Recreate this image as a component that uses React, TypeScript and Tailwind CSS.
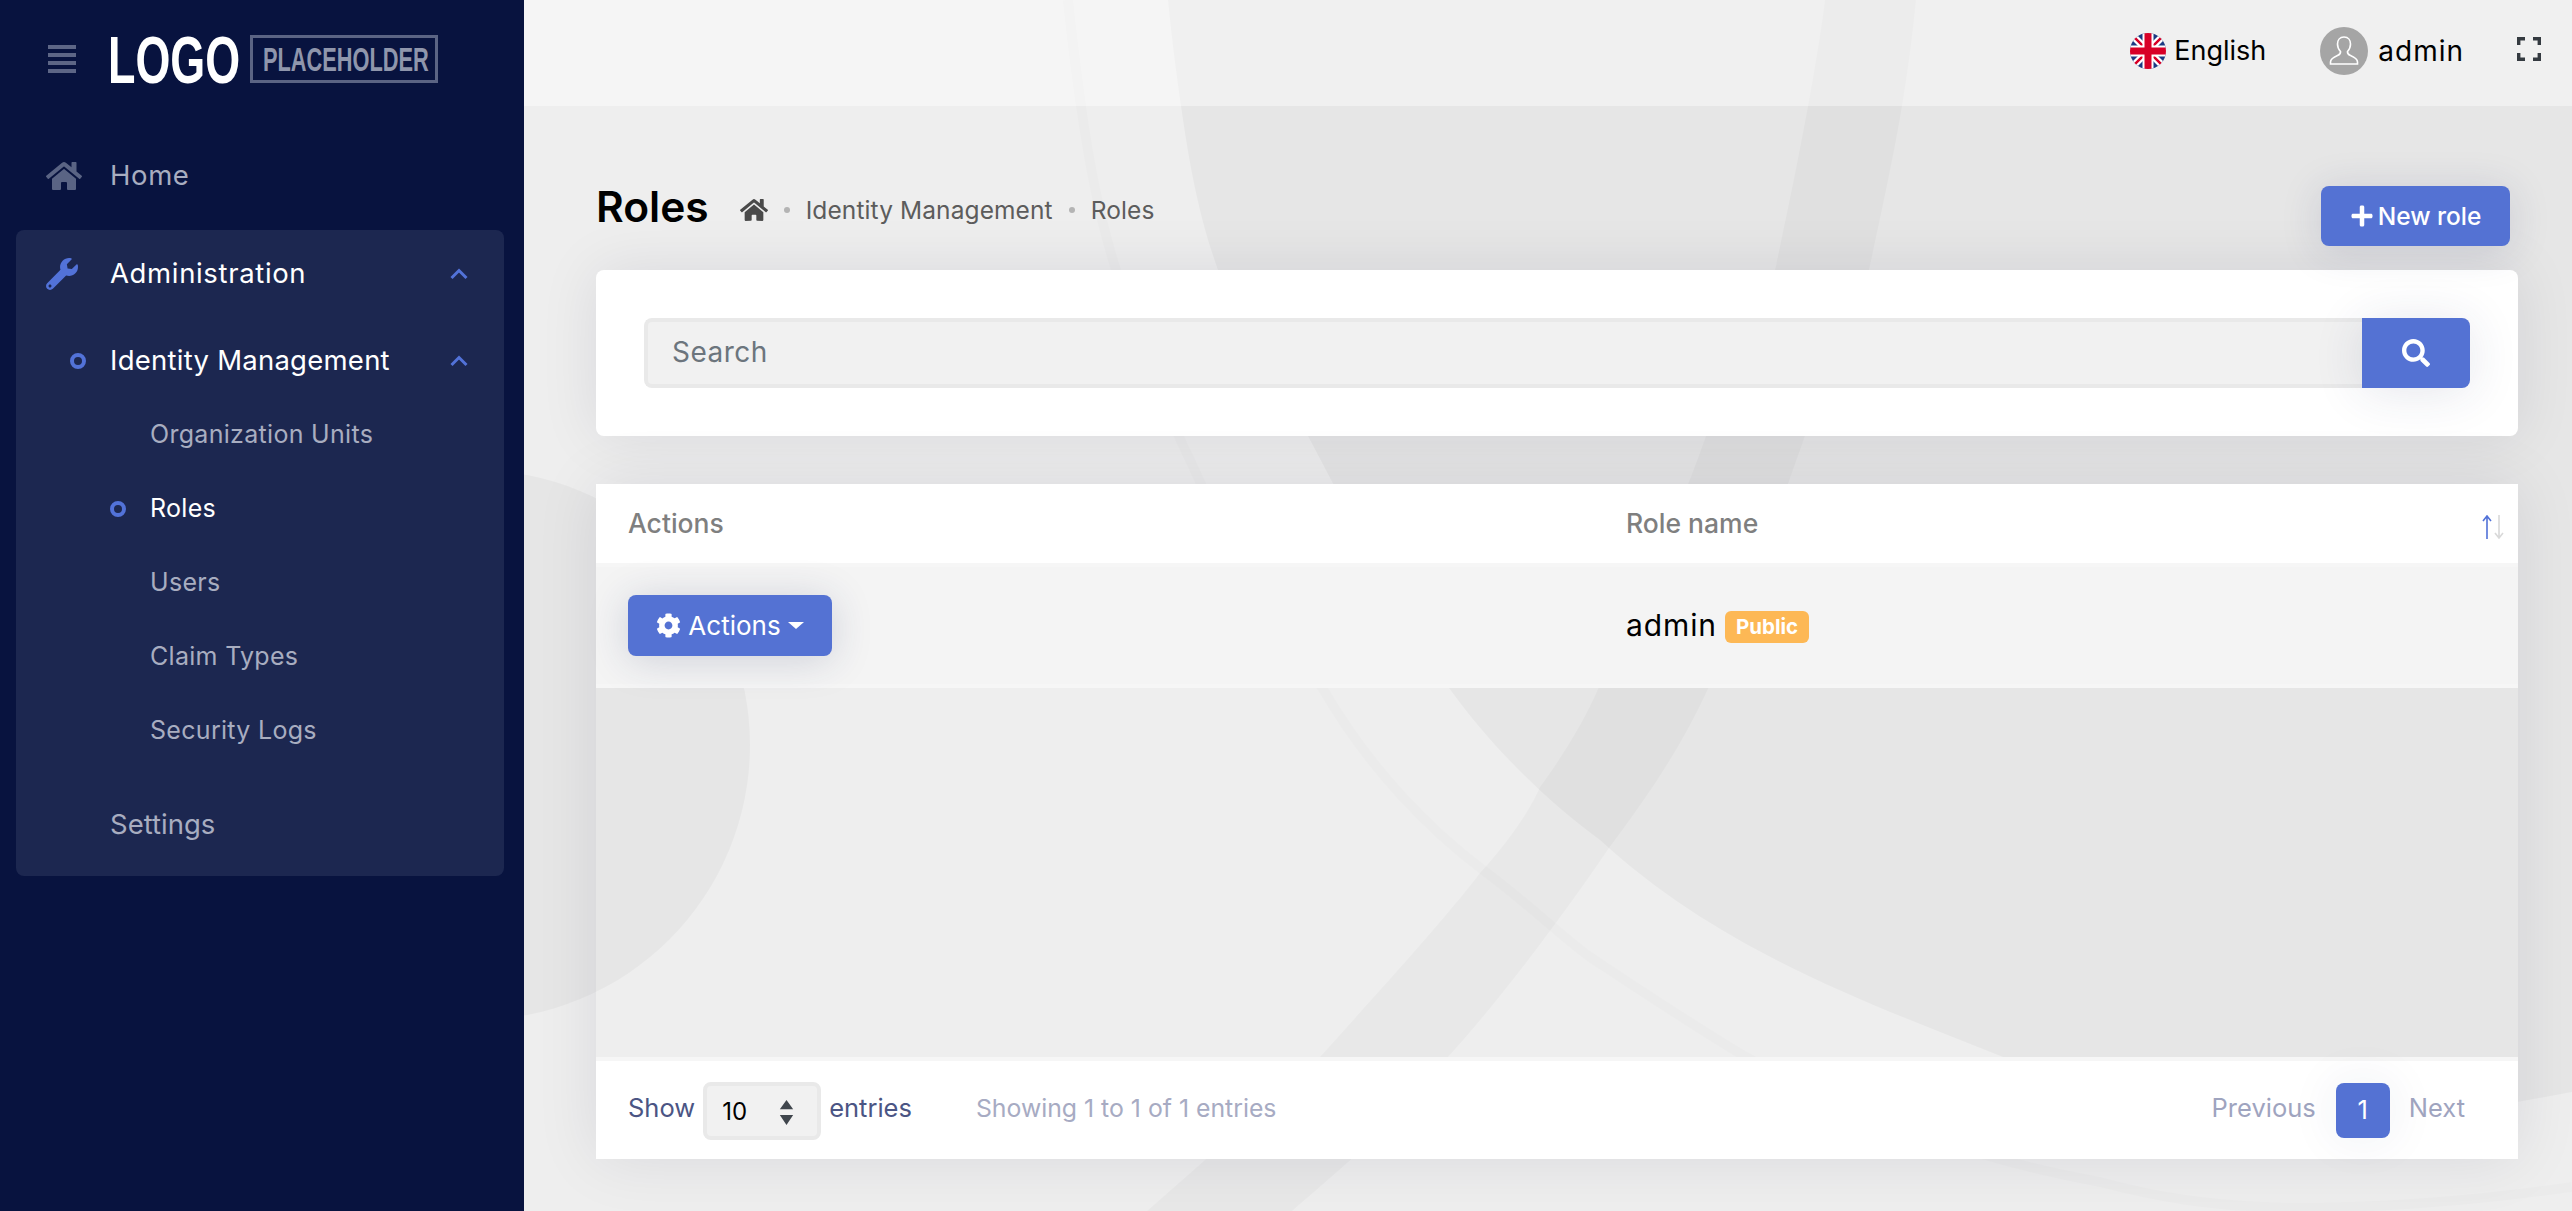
import { FaHome, FaWrench, FaCog, FaPlus, FaSearch } from "react-icons/fa";

const subItems = [
  { label: "Organization Units", active: false },
  { label: "Roles", active: true },
  { label: "Users", active: false },
  { label: "Claim Types", active: false },
  { label: "Security Logs", active: false },
];

function ChevronUp() {
  return (
    <svg width="18" height="12" viewBox="0 0 18 12" fill="none" className="text-[#5272d8]">
      <polyline points="1.5,10 9,2.5 16.5,10" stroke="currentColor" strokeWidth="3" />
    </svg>
  );
}

function Ring() {
  return <span className="block w-4 h-4 rounded-full border-4 border-[#5272d8]" />;
}

function Logo() {
  return (
    <div className="flex items-center gap-[10px] h-12">
      <div className="w-[132px] h-12 overflow-visible flex items-center">
        <span className="inline-block origin-left scale-x-[0.67] text-[67px] leading-none font-bold text-white whitespace-nowrap [font-family:'Liberation_Sans',sans-serif]">
          LOGO
        </span>
      </div>
      <div className="w-[188px] h-12 border-[3px] border-[#5b6484] flex items-center pl-[10px]">
        <span className="inline-block origin-left scale-x-[0.66] text-[33px] leading-none font-bold text-[#8f96ac] whitespace-nowrap [font-family:'Liberation_Sans',sans-serif]">
          PLACEHOLDER
        </span>
      </div>
    </div>
  );
}

function Sidebar() {
  return (
    <aside className="relative z-10 w-[524px] shrink-0 h-full bg-[#08133f] text-[27.5px]">
      <div className="h-[118px] flex items-center pl-12 pt-0">
        <div className="w-7 mr-8 flex flex-col gap-[4px]">
          <span className="h-1 bg-[#5d6686]" />
          <span className="h-1 bg-[#5d6686]" />
          <span className="h-1 bg-[#5d6686]" />
          <span className="h-1 bg-[#5d6686]" />
        </div>
        <Logo />
      </div>
      <div className="h-[112px] flex items-center pl-[46px] pt-1 tracking-[0.6px] text-[#a8adc0]">
        <span className="w-16">
          <FaHome size={36} className="text-[#5a6484]" />
        </span>
        Home
      </div>
      <div className="ml-4 mr-5 h-[646px] rounded-lg bg-[#1c2750]">
        <div className="h-[84px] flex items-center pl-[30px] pr-9 pt-1 tracking-[0.65px] text-white">
          <span className="w-16">
            <FaWrench size={32} className="text-[#5272d8]" />
          </span>
          <span className="flex-1">Administration</span>
          <ChevronUp />
        </div>
        <div className="h-[74px] mt-[10px] flex items-center pl-[54px] pr-9 tracking-[0.25px] text-white">
          <span className="w-10">
            <Ring />
          </span>
          <span className="flex-1">Identity Management</span>
          <ChevronUp />
        </div>
        {subItems.map((item) => (
          <div
            key={item.label}
            className={`h-[74px] flex items-center pl-[94px] text-[25px] tracking-[0.3px] ${item.active ? "text-white" : "text-[#a8adc0]"}`}
          >
            <span className="w-10">{item.active && <Ring />}</span>
            {item.label}
          </div>
        ))}
        <div className="h-[76px] mt-[19px] flex items-center pl-[94px] text-[#a8adc0]">Settings</div>
      </div>
    </aside>
  );
}

function Background() {
  return (
    <svg className="absolute inset-0 w-full h-full" viewBox="524 0 2048 1211" preserveAspectRatio="none">
      <circle cx="475" cy="745" r="275" fill="#000" fillOpacity="0.033" />
      <path
        d="M1168 0 C1172 40 1176 70 1181 106 C1190 170 1200 220 1218 270 C1240 330 1275 380 1308 436 C1355 525 1400 615 1449 688 C1490 745 1545 800 1600 840 C1720 950 1860 1000 2003 1057 C2070 1095 2130 1120 2200 1135 C2330 1135 2450 1115 2572 1092 L2572 0 Z"
        fill="#000"
        fillOpacity="0.033"
      />
      <path
        d="M1147 1211 L1205 1160 L1320 1057 C1380 990 1440 925 1480 873 C1510 840 1530 810 1540 787 C1560 760 1585 720 1598 689 C1640 600 1680 510 1706 436 C1735 370 1760 320 1775 270 C1790 200 1815 80 1825 0 L1916 0 C1912 40 1908 70 1902 106 C1895 150 1880 220 1869 270 C1850 340 1830 380 1805 436 C1775 520 1745 610 1708 689 C1680 750 1645 800 1609 848 C1560 920 1500 1000 1448 1057 C1410 1110 1340 1170 1292 1211 Z"
        fill="#000"
        fillOpacity="0.022"
      />
      <path
        d="M1068 0 C1072 40 1076 70 1081 106 C1090 170 1100 220 1116 270 C1140 340 1165 410 1190 460 C1230 550 1280 630 1323 689 C1370 770 1430 830 1483 870 C1530 905 1560 935 1590 957 C1640 990 1700 1030 1746 1057 C1860 1120 1980 1160 2100 1182 C2160 1198 2210 1205 2267 1207 C2370 1210 2480 1200 2572 1187"
        fill="none"
        stroke="#000"
        strokeOpacity="0.013"
        strokeWidth="10"
      />
    </svg>
  );
}

function UkFlag() {
  return (
    <svg width="36" height="36" viewBox="0 0 36 36">
      <defs>
        <clipPath id="flagClip">
          <circle cx="18" cy="18" r="18" />
        </clipPath>
      </defs>
      <g clipPath="url(#flagClip)">
        <rect width="36" height="36" fill="#1b3a82" />
        <path d="M0 0 L36 36 M36 0 L0 36" stroke="#fff" strokeWidth="7" />
        <path d="M0 0 L36 36 M36 0 L0 36" stroke="#d80027" strokeWidth="2.5" />
        <path d="M18 0 V36 M0 18 H36" stroke="#fff" strokeWidth="11" />
        <path d="M18 0 V36 M0 18 H36" stroke="#d80027" strokeWidth="7" />
      </g>
    </svg>
  );
}

function Avatar() {
  return (
    <span className="w-12 h-12 rounded-full bg-[#a5a5a5] flex items-center justify-center">
      <svg width="32" height="32" viewBox="0 0 32 32" fill="none" stroke="#fff" strokeWidth="1.6">
        <path d="M16 2 C11.5 2 9.5 5.5 9.5 9 C9.5 12.5 11 15 12.5 16.5 C12.8 18.5 12 19.5 9.5 20.5 C6 22 2.5 23.5 2.5 27 L2.5 29 L29.5 29 L29.5 27 C29.5 23.5 26 22 22.5 20.5 C20 19.5 19.2 18.5 19.5 16.5 C21 15 22.5 12.5 22.5 9 C22.5 5.5 20.5 2 16 2 Z" />
      </svg>
    </span>
  );
}

function ExpandIcon() {
  return (
    <svg width="24" height="24" viewBox="0 0 24 24" fill="none" stroke="#343a40" strokeWidth="3.4">
      <path d="M1.7 8 V1.7 H8 M16 1.7 H22.3 V8 M22.3 16 V22.3 H16 M8 22.3 H1.7 V16" />
    </svg>
  );
}

function Topbar() {
  return (
    <header className="h-[106px] bg-white/40 flex items-center justify-end pr-[31px] pb-[4px] text-black">
      <UkFlag />
      <span className="ml-2 text-[27px]">English</span>
      <span className="ml-[54px]">
        <Avatar />
      </span>
      <span className="ml-[10px] text-[28px] tracking-[1px]">admin</span>
      <span className="ml-[53px] mb-1">
        <ExpandIcon />
      </span>
    </header>
  );
}

function Breadcrumb() {
  return (
    <div className="flex items-center mt-[6px] text-[24.5px] tracking-[0.1px] text-[#5c5c5c]">
      <FaHome size={28} className="text-[#4a4a4a]" />
      <span className="mx-4 w-[6px] h-[6px] rounded-full bg-[#b4b4b4]" />
      <span>Identity Management</span>
      <span className="mx-4 w-[6px] h-[6px] rounded-full bg-[#b4b4b4]" />
      <span>Roles</span>
    </div>
  );
}

function SortIcon() {
  return (
    <svg width="22" height="24" viewBox="0 0 22 24" fill="none" strokeWidth="1.6">
      <path d="M5 24 V1 M1 6 L5 1 L9 6" stroke="#5272d8" />
      <path d="M17 0 V23 M13 18 L17 23 L21 18" stroke="#d9d9d9" />
    </svg>
  );
}

function SelectArrows() {
  return (
    <svg width="17" height="25" viewBox="0 0 18 30" fill="#40464d">
      <path d="M9 0 L17 11 H1 Z M1 18 H17 L9 30 Z" />
    </svg>
  );
}

export default function App() {
  return (
    <div className="flex h-screen overflow-hidden [font-family:Inter,sans-serif]">
      <Sidebar />
      <main className="relative flex-1 min-w-0 bg-[#eeeeee]">
        <Background />
        <div className="relative">
          <Topbar />
          <div className="pt-20 pl-[72px] pr-[54px]">
            <div className="flex justify-between mb-6 pr-2">
              <div className="flex items-center h-[42px] gap-[31px]">
                <h1 className="text-[42.5px] font-semibold text-black leading-none">Roles</h1>
                <Breadcrumb />
              </div>
              <button className="w-[189px] h-[60px] rounded-lg bg-[#5472d3] text-white text-[24.5px] font-medium flex items-center justify-center gap-[4px] shadow-[0_4px_40px_rgba(40,50,100,0.15)]">
                <FaPlus size={24} />
                New role
              </button>
            </div>

            <section className="h-[166px] bg-white rounded-lg shadow-[0_0_60px_rgba(20,20,50,0.09)] flex items-center pl-12 pr-12 mb-12">
              <div className="flex-1 h-[70px] rounded-l-lg bg-[#f1f1f1] border-4 border-r-0 border-[#e9e9e9] flex items-center pl-[24px] pb-[2px] text-[28px] tracking-[0.5px] text-[#6c757d]">
                Search
              </div>
              <button className="w-[108px] h-[70px] rounded-r-lg bg-[#5472d3] text-white flex items-center justify-center shadow-[0_4px_50px_rgba(40,50,100,0.12)]">
                <FaSearch size={28} />
              </button>
            </section>

            <section className="shadow-[0_0_60px_rgba(20,20,50,0.09)]">
              <div className="h-[79px] bg-white flex items-center pl-8 pr-3 text-[26.5px] font-medium text-[#7f7f7f]">
                <span className="w-[998px]">Actions</span>
                <span className="flex-1">Role name</span>
                <span className="mt-[6px] mr-[2px]">
                  <SortIcon />
                </span>
              </div>
              <div className="h-[125px] bg-[#f4f4f4] border-t-4 border-b-4 border-t-[#f6f6f6] border-b-[#f6f6f6] flex items-center pl-8">
                <div className="w-[998px]">
                  <button className="w-[204px] h-[61px] rounded-lg bg-[#5472d3] text-white text-[26px] flex items-center justify-center gap-[7px] shadow-[0_4px_40px_rgba(40,50,100,0.18)]">
                    <FaCog size={25} />
                    Actions
                    <span className="w-0 h-0 border-x-[8px] border-x-transparent border-t-[7px] border-t-white" />
                  </button>
                </div>
                <span className="text-[30px] tracking-[0.9px] text-black">admin</span>
                <span className="ml-2 mt-[3px] h-8 px-[11px] rounded-md bg-[#fdb855] text-white text-[20.5px] font-bold flex items-center">
                  Public
                </span>
              </div>
              <div className="h-[369px]" />
              <div className="h-[102px] bg-white border-t-4 border-t-[#f6f6f6] flex items-center pl-8 pr-[53px] text-[25.5px] text-[#4b5584]">
                <span className="mb-[3px]">Show</span>
                <div className="w-[118px] h-[58px] mx-2 mt-[2px] rounded-lg bg-[#f1f1f1] border-4 border-[#e9e9e9] flex items-center justify-between pl-[15px] pr-[22px] pt-[2px] text-black text-[24px]">
                  10
                  <SelectArrows />
                </div>
                <span className="mb-[3px]">entries</span>
                <span className="ml-[64px] mb-[3px] text-[24.8px] text-[#a7abc3]">Showing 1 to 1 of 1 entries</span>
                <div className="ml-auto flex items-center text-[#9fa4bf]">
                  <span className="mb-[3px]">Previous</span>
                  <span className="w-[54px] h-[55px] ml-5 mr-[19px] rounded-lg bg-[#5472d3] text-white flex items-center justify-center shadow-[0_0_50px_rgba(40,50,100,0.08)]">
                    1
                  </span>
                  <span className="mb-[3px]">Next</span>
                </div>
              </div>
            </section>
          </div>
        </div>
      </main>
    </div>
  );
}
